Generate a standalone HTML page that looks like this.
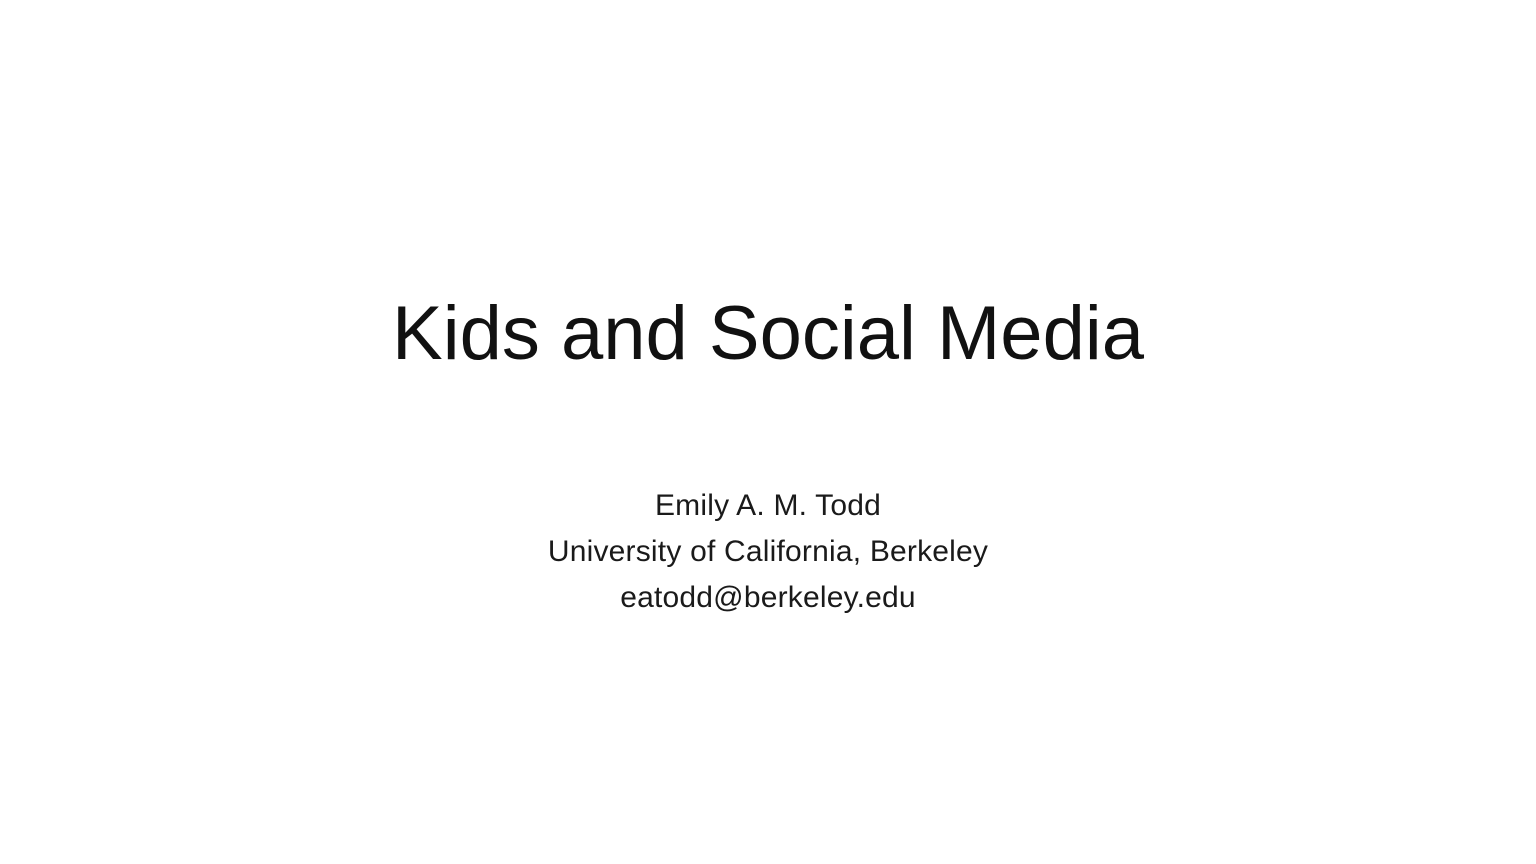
<!DOCTYPE html>
<html><head><style>
html,body{margin:0;padding:0;width:1536px;height:864px;background:#fff;overflow:hidden}
body{font-family:"Liberation Sans",sans-serif;color:#000;position:relative}
.t{position:absolute;left:0;width:1536px;text-align:center;top:294px;font-size:76px;line-height:80px;letter-spacing:0px;color:#111}
.s{position:absolute;left:0;width:1536px;text-align:center;top:483px;font-size:30px;line-height:46px;color:#1a1a1a;letter-spacing:0.2px}
</style></head><body>
<div class="t">Kids and Social Media</div>
<div class="s">Emily A. M. Todd<br>University of California, Berkeley<br>eatodd@berkeley.edu</div>
</body></html>
